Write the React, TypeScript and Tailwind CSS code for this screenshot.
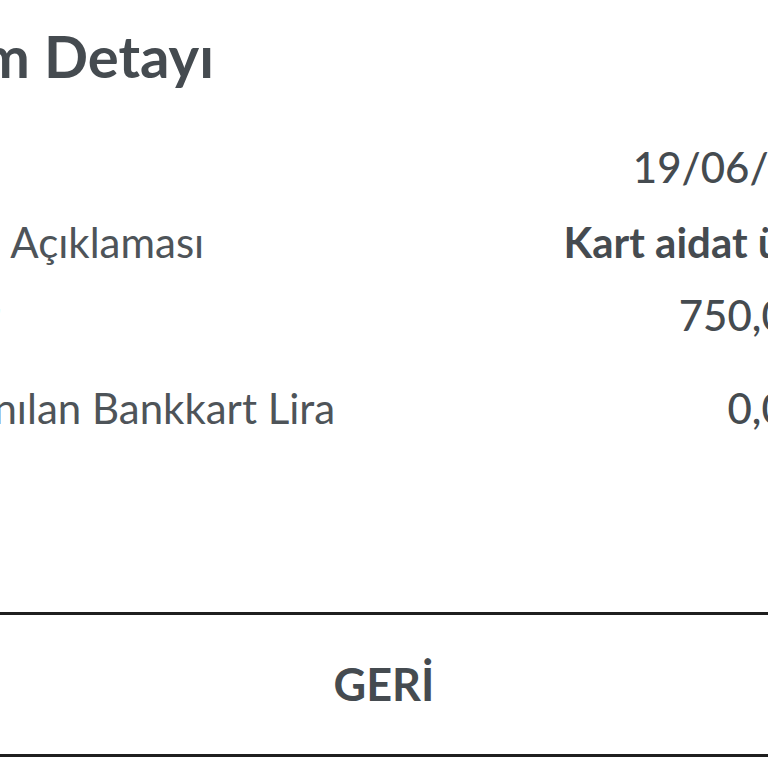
import React from "react";

const rows = [
  { label: "Tarih", value: "19/06/2023", strong: false, gap: "mt-[61px]" },
  { label: "İşlem Açıklaması", value: "Kart aidat ücreti", strong: true, gap: "mt-[33px]" },
  { label: "Tutar", value: "750,00 TL", strong: false, gap: "mt-[31px]" },
  { label: "Kazanılan Bankkart Lira", value: "0,00 TL", strong: false, gap: "mt-[51px]" },
];

const App = () => {
  return (
    <div className="w-[768px] h-[768px] overflow-hidden bg-white font-['Lato',sans-serif] text-[#454b50]">
      <div className="w-[961px] ml-[-95px]">
        <h1 className="pt-[27px] ml-[-11px] text-[58px] leading-none font-bold">İşlem Detayı</h1>

        {rows.map((row) => (
          <div key={row.label} className={`${row.gap} flex justify-between text-[42px] leading-none`}>
            <span className="text-[#4e5459]">{row.label}</span>
            <span className={row.strong ? "font-bold" : "font-medium"}>{row.value}</span>
          </div>
        ))}
      </div>

      <button className="mt-[183px] w-full h-[145px] border-y-[3px] border-[#1f1f1f] flex items-center justify-center text-[45px] font-bold text-[#454b50]">
        GERİ
      </button>
    </div>
  );
};

export default App;
